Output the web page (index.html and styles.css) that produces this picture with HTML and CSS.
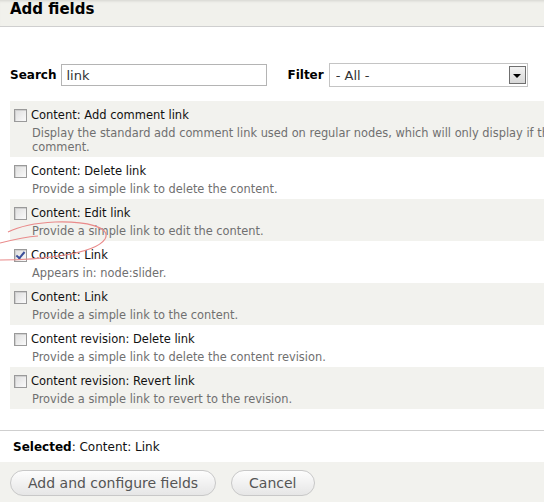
FILE: index.html
```html
<!DOCTYPE html>
<html>
<head>
<meta charset="utf-8">
<link rel="stylesheet" href="styles.css">
</head>
<body>
<div class="dialog">
  <div class="header"><h1 class="title">Add fields</h1></div>

  <div class="filters">
    <label class="flabel" for="s">Search</label>
    <input id="s" class="search" type="text" value="link">
    <label class="flabel filter-label" for="f">Filter</label>
    <div class="select-wrap">
      <select id="f" class="select"><option>- All -</option></select>
    </div>
  </div>

  <div class="list">
    <div class="row odd">
      <div class="row-title"><input type="checkbox" class="cb"><span>Content: Add comment link</span></div>
      <div class="desc">Display the standard add comment link used on regular nodes, which will only display if the viewing user has access to add a<br>comment.</div>
    </div>
    <div class="row">
      <div class="row-title"><input type="checkbox" class="cb"><span>Content: Delete link</span></div>
      <div class="desc">Provide a simple link to delete the content.</div>
    </div>
    <div class="row odd">
      <div class="row-title"><input type="checkbox" class="cb"><span>Content: Edit link</span></div>
      <div class="desc">Provide a simple link to edit the content.</div>
    </div>
    <div class="row">
      <div class="row-title"><input type="checkbox" class="cb" checked><span>Content: Link</span></div>
      <div class="desc">Appears in: node:slider.</div>
    </div>
    <div class="row odd">
      <div class="row-title"><input type="checkbox" class="cb"><span>Content: Link</span></div>
      <div class="desc">Provide a simple link to the content.</div>
    </div>
    <div class="row">
      <div class="row-title"><input type="checkbox" class="cb"><span>Content revision: Delete link</span></div>
      <div class="desc">Provide a simple link to delete the content revision.</div>
    </div>
    <div class="row odd">
      <div class="row-title"><input type="checkbox" class="cb"><span>Content revision: Revert link</span></div>
      <div class="desc">Provide a simple link to revert to the revision.</div>
    </div>
  </div>

  <div class="selected"><strong>Selected</strong>: Content: Link</div>

  <div class="footer">
    <button class="btn">Add and configure fields</button>
    <button class="btn">Cancel</button>
  </div>

  <svg class="scribble" width="120" height="60" viewBox="0 0 120 60">
    <path d="M0 47 C 35 47, 95 42, 105 26 C 112 14, 85 8, 55 9 C 35 10, 18 14, 8 19" fill="none" stroke="#e98a8a" stroke-width="1.2"/>
    <path d="M0 30 C 12 27, 25 24, 38 23" fill="none" stroke="#e98a8a" stroke-width="1.2"/>
  </svg>
</div>
</body>
</html>
```

FILE: styles.css
```css
html, body {
  margin: 0;
  padding: 0;
  overflow: hidden;
  background: #fff;
}
body {
  font-family: "DejaVu Sans", Verdana, sans-serif;
  color: #222;
}
.dialog {
  position: relative;
  width: 900px;
}
.header {
  background: #f1f1ec;
  border-bottom: 1px solid #cfcfcf;
  height: 26px;
  box-shadow: inset 0 3px 3px -2px rgba(0,0,0,0.12);
}
.title {
  margin: 0;
  padding-left: 10px;
  font-size: 15px;
  line-height: 18px;
  font-weight: bold;
  color: #000;
}
.filters {
  display: flex;
  align-items: center;
  padding: 36px 0 0 10px;
  height: 24px;
}
.flabel {
  font-size: 12px;
  font-weight: bold;
  color: #000;
  margin-right: 5px;
}
.filter-label {
  margin-left: 20px;
}
.search {
  box-sizing: border-box;
  width: 206px;
  height: 22px;
  border: 1px solid #b4b4b4;
  padding: 0 4px;
  font-family: "DejaVu Sans", Verdana, sans-serif;
  font-size: 13px;
  color: #333;
  margin: 0;
  outline: none;
}
.select-wrap {
  position: relative;
  width: 199px;
  height: 24px;
}
.select {
  -webkit-appearance: none;
  appearance: none;
  box-sizing: border-box;
  width: 199px;
  height: 24px;
  border: 1px solid #c4c4c4;
  background: #fff;
  padding: 0 6px;
  font-family: "DejaVu Sans", Verdana, sans-serif;
  font-size: 13px;
  color: #333;
  margin: 0;
}
.select-wrap::after {
  content: "";
  position: absolute;
  right: 2px;
  top: 3px;
  width: 15px;
  height: 16px;
  border: 1px solid #6f6f6f;
  background: linear-gradient(#f2f2f2, #d8d8d8);
  pointer-events: none;
}
.select-wrap::before {
  content: "";
  position: absolute;
  right: 7px;
  top: 11px;
  width: 0;
  height: 0;
  border-left: 4px solid transparent;
  border-right: 4px solid transparent;
  border-top: 4px solid #000;
  z-index: 1;
  pointer-events: none;
}
.list {
  margin: 14px 0 0 10px;
}
.row {
  padding: 6px 0 3px 0;
  background: #fff;
}
.row.odd {
  background: #f2f2ee;
}
.row-title {
  display: flex;
  align-items: center;
  height: 16px;
  font-size: 11.5px;
  color: #111;
}
.cb {
  -webkit-appearance: none;
  appearance: none;
  position: relative;
  box-sizing: border-box;
  width: 13px;
  height: 13px;
  margin: 0 4px 0 4px;
  border: 1px solid #9a9a9a;
  background: linear-gradient(135deg, #dedede, #fafafa);
  box-shadow: inset 1px 1px 0 #cfcfcf;
}
.cb:checked::after {
  content: "";
  position: absolute;
  left: 3px;
  top: 0px;
  width: 3px;
  height: 7px;
  border-right: 2px solid #3b4f9a;
  border-bottom: 2px solid #3b4f9a;
  transform: rotate(40deg);
}
.desc {
  margin: 3px 0 0 22px;
  font-size: 11.4px;
  line-height: 14px;
  color: #707070;
}
.selected {
  margin-top: 21px;
  border-top: 1px solid #cfcfcf;
  padding: 8px 0 0 13px;
  height: 23px;
  font-size: 12px;
  line-height: 16px;
  color: #111;
}
.selected strong {
  color: #000;
}
.footer {
  background: #f2f2ee;
  display: flex;
  gap: 15px;
  padding: 8px 0 10px 10px;
}
.btn {
  box-sizing: border-box;
  height: 26px;
  padding: 0 17px;
  border: 1px solid #c8c8c8;
  border-radius: 13px;
  background: linear-gradient(#fdfdfd, #e6e6e6);
  font-family: "DejaVu Sans", Verdana, sans-serif;
  font-size: 14px;
  color: #555;
  margin: 0;
}
.scribble {
  position: absolute;
  left: 0;
  top: 213px;
  pointer-events: none;
}
```
